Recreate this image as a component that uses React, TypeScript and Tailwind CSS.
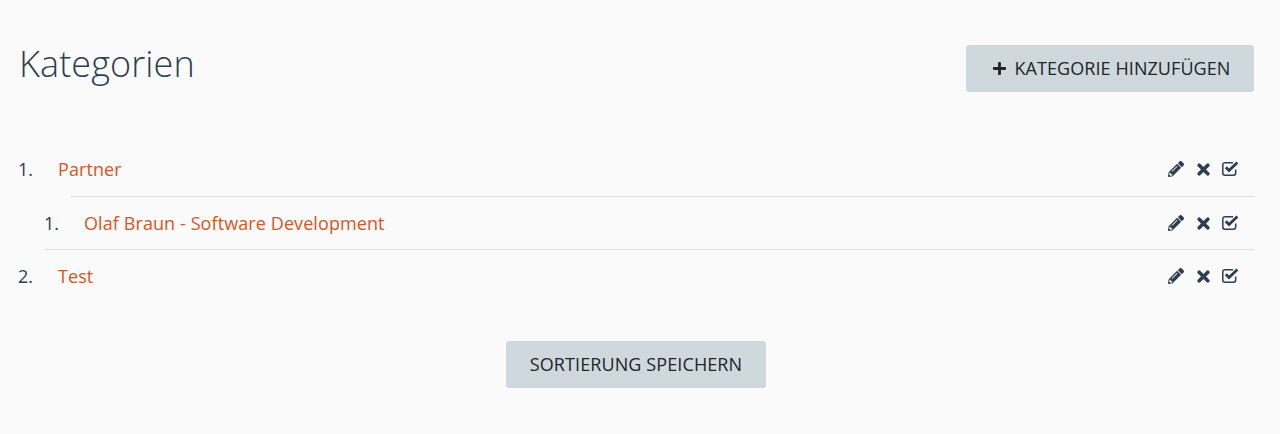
import React from 'react'
import { FaPencilAlt, FaPlus } from 'react-icons/fa'

const CrossIcon = () => (
  <svg viewBox="0 0 13 13" className="ml-[13px] w-[13px] h-[13px] mt-[1px]" fill="none" stroke="currentColor" strokeWidth="3.6" strokeLinecap="round">
    <path d="M2.2 2.2 10.8 10.8M10.8 2.2 2.2 10.8" />
  </svg>
)

const CheckIcon = () => (
  <svg viewBox="0 0 17 15" className="ml-[12px] w-[17px] h-[15px] -mt-[2px]" fill="none" stroke="currentColor">
    <path d="M11 1.7H3A2.2 2.2 0 0 0 .8 3.9V12A2.2 2.2 0 0 0 3 14.2H11.5A2.2 2.2 0 0 0 13.7 12V8.5" strokeWidth="1.5" />
    <path d="M3.8 6.3 7 9.5 15.4 1.6" strokeWidth="2.8" />
  </svg>
)

const Actions = () => (
  <div className="flex items-center text-[#2c3e50]">
    <FaPencilAlt className="w-[16px] h-[16px]" />
    <CrossIcon />
    <CheckIcon />
  </div>
)

const Row = ({ label }: { label: string }) => (
  <div className="h-[52px] flex items-center justify-between pl-[13px] pr-[15px]">
    <a className="tracking-[0.09px] text-[#d4561f]">{label}</a>
    <Actions />
  </div>
)

const App = () => {
  return (
    <div className="h-[434px] bg-[#fafafa] px-[26px] pt-[45px] font-['Open_Sans',sans-serif] text-[18px] text-[#2c3e50]">
      <div className="flex items-start justify-between">
        <h1 className="-ml-[7px] -mt-[1px] text-[36px] leading-[40px] font-light tracking-[0.1px]">Kategorien</h1>
        <button className="h-[47px] w-[288px] pl-[2px] flex items-center justify-center rounded-[3px] bg-[#cfd8dd] tracking-[0.07px] text-[#212529]">
          <FaPlus className="w-[15px] h-[15px] mr-[8px]" />
          KATEGORIE HINZUFÜGEN
        </button>
      </div>

      <ol className="mt-[51px] -ml-[8px]">
        <li className="flex">
          <span className="w-[27px] leading-[52px]">1.</span>
          <div className="flex-1">
            <div className="pb-[1px]">
              <Row label="Partner" />
            </div>
            <ol>
              <li className="flex">
                <span className="w-[26px] -ml-[1px] mr-[1px] leading-[52px] mt-[1px]">1.</span>
                <div className="flex-1 border-t border-[#dddddd]">
                  <Row label="Olaf Braun - Software Development" />
                </div>
              </li>
            </ol>
          </div>
        </li>
        <li className="flex">
          <span className="w-[27px] leading-[52px] mt-[1px]">2.</span>
          <div className="flex-1 border-t border-[#dddddd]">
            <Row label="Test" />
          </div>
        </li>
      </ol>

      <div className="flex justify-center mt-[39px] pr-[8px]">
        <button className="h-[47px] w-[260px] rounded-[3px] bg-[#cfd8dd] tracking-[0.1px] text-[#212529]">
          SORTIERUNG SPEICHERN
        </button>
      </div>
    </div>
  )
}

export default App
